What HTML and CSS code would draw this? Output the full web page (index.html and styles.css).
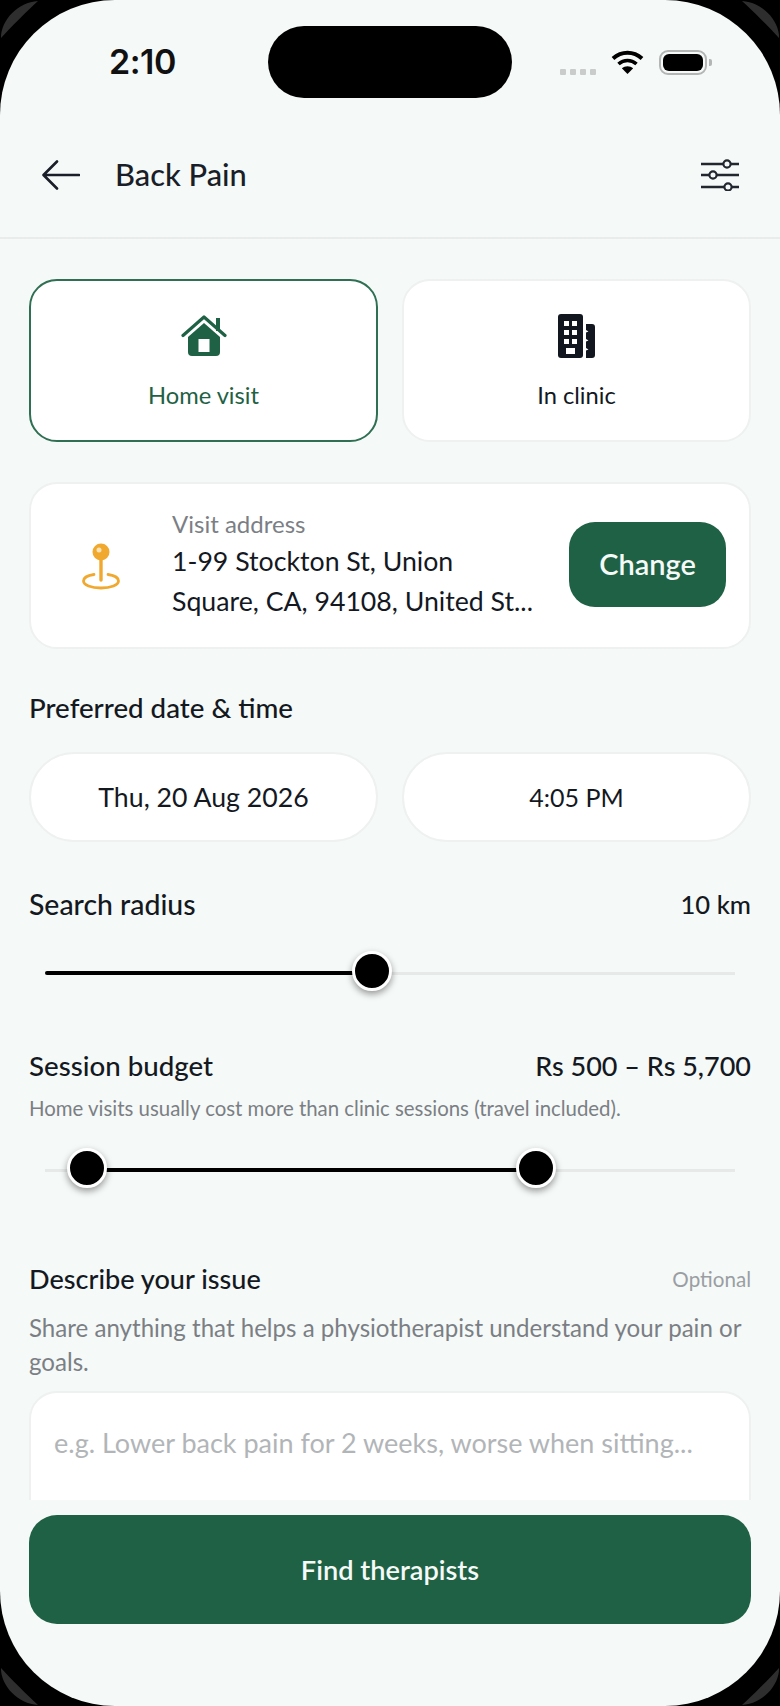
FILE: index.html
```html
<!DOCTYPE html>
<html lang="en">

<head>
    <meta charset="UTF-8" />
    <meta name="viewport" content="width=device-width, initial-scale=1" />
    <title>Back Pain</title>
    <link rel="stylesheet" href="styles.css">
</head>

<body>
    <div class="screen">
        <div class="status-bar">
            <div class="status-time">2:10</div>
            <div class="island"></div>
            <div class="status-icons">
                <div class="signal-dots"><span></span><span></span><span></span><span></span></div>
                <svg width="33" height="24" viewBox="0 0 33 24">
                    <path d="M2 8.5C10.5 .8 22.500 .8 31 8.500" fill="none" stroke="#000" stroke-width="4" />
                    <path d="M7.500 14C12.800 9.300 20.200 9.300 25.500 14" fill="none" stroke="#000" stroke-width="3.600" />
                    <path d="M16.500 24L10.800 18.300C14 15.400 19 15.400 22.200 18.300Z" fill="#000" />
                </svg>
                <div class="battery">
                    <div class="battery-level"></div>
                </div>
            </div>
        </div>

        <div class="top-bar">
            <div class="top-bar-left">
                <svg width="38" height="30" viewBox="0 0 38 30">
                    <path d="M37 15H2M15 1.500L1.500 15L15 28.500" fill="none" stroke="#1a1e28" stroke-width="2.600" stroke-linecap="round" stroke-linejoin="round" />
                </svg>
                <div class="page-title">Back Pain</div>
            </div>
            <svg width="40" height="32" viewBox="0 0 40 32">
                <path d="M1 5H39M1 16H39M1 28H39" stroke="#22262e" stroke-width="2.600" />
                <circle cx="27" cy="5" r="3.600" fill="#f5f9f7" stroke="#22262e" stroke-width="2.200" />
                <circle cx="13" cy="16" r="3.600" fill="#f5f9f7" stroke="#22262e" stroke-width="2.200" />
                <circle cx="28" cy="28" r="3.600" fill="#f5f9f7" stroke="#22262e" stroke-width="2.200" />
            </svg>
        </div>

        <div class="content">
            <div class="two-col">
                <div class="visit-card selected">
                    <svg width="46" height="43" viewBox="0 0 46 43">
                        <path d="M2 21.500L23 3L44 21.500" fill="none" stroke="#1f6144" stroke-width="3.200" stroke-linecap="round" stroke-linejoin="round" />
                        <rect x="35" y="4" width="4" height="13" fill="#1f6144" />
                        <path d="M7 23L23 9L39 23V38Q39 42 35 42H11Q7 42 7 38Z" fill="#1f6144" />
                        <rect x="17.500" y="25" width="11" height="13" fill="#fff" />
                    </svg>
                    <div class="visit-label">Home visit</div>
                </div>
                <div class="visit-card">
                    <svg width="37" height="44" viewBox="0 0 37 44">
                        <rect x="0" y="0" width="25" height="44" rx="3" fill="#12161f" />
                        <path d="M28 10H34Q37 10 37 13V41Q37 44 34 44H28V36.500L30.500 35.500L28 34V27.500L30.500 26.500L28 25V18.500L30.500 17.500L28 16Z" fill="#12161f" />
                        <g fill="#fff">
                            <rect x="6" y="7" width="5" height="5" />
                            <rect x="14" y="7" width="5" height="5" />
                            <rect x="6" y="16" width="5" height="5" />
                            <rect x="14" y="16" width="5" height="5" />
                            <rect x="6" y="25" width="5" height="5" />
                            <rect x="14" y="25" width="5" height="5" />
                            <rect x="8" y="34" width="9" height="6" />
                        </g>
                    </svg>
                    <div class="visit-label dark">In clinic</div>
                </div>
            </div>

            <div class="address-card">
                <svg class="pin" width="38" height="47" viewBox="0 0 38 47">
                    <path d="M12 31.500C5.500 32.500 1.500 35 1.500 38C1.500 42 9 45 19 45C29 45 36.500 42 36.500 38C36.500 35 32.500 32.500 26 31.500" fill="none" stroke="#f0a92e" stroke-width="2.800" stroke-linecap="round" />
                    <path d="M19 14V37" stroke="#f0a92e" stroke-width="3.400" stroke-linecap="round" />
                    <circle cx="19" cy="9" r="8.500" fill="#f0a92e" />
                    <circle cx="17" cy="7" r="2.500" fill="#fbe3b5" />
                </svg>
                <div class="address-text">
                    <div class="address-caption">Visit address</div>
                    <div class="address-line">1-99 Stockton St, Union</div>
                    <div class="address-line">Square, CA, 94108, United St...</div>
                </div>
                <div class="change-btn">Change</div>
            </div>

            <div class="section-label date-label">Preferred date &amp; time</div>
            <div class="two-col pills">
                <div class="pill">Thu, 20 Aug 2026</div>
                <div class="pill time">4:05 PM</div>
            </div>

            <div class="label-row radius-row">
                <div class="section-label radius-title">Search radius</div>
                <div class="section-value small">10 km</div>
            </div>
            <div class="slider radius-slider">
                <div class="track-fill" style="left: 0; width: 47.4%"></div>
                <div class="thumb" style="left: 47.4%"></div>
            </div>

            <div class="label-row budget-row">
                <div class="section-label">Session budget</div>
                <div class="section-value">Rs 500 – Rs 5,700</div>
            </div>
            <div class="hint">Home visits usually cost more than clinic sessions (travel included).</div>
            <div class="slider budget-slider">
                <div class="track-fill" style="left: 6.1%; width: 65.1%"></div>
                <div class="thumb" style="left: 6.1%"></div>
                <div class="thumb" style="left: 71.2%"></div>
            </div>

            <div class="label-row describe-row">
                <div class="section-label describe-title">Describe your issue</div>
                <div class="optional">Optional</div>
            </div>
            <div class="describe-help">Share anything that helps a physiotherapist understand your pain or goals.</div>
            <div class="issue-box">e.g. Lower back pain for 2 weeks, worse when sitting...</div>
        </div>

        <div class="footer">
            <div class="find-btn">Find therapists</div>
        </div>

        <!-- bezel highlight in the corners -->
        <svg class="bezel bezel-tl" width="46" height="46" viewBox="0 0 46 46">
            <path d="M1 38C1 20 18 2 38 1C28 10 10 28 1 38Z" fill="#2e2e2e" />
        </svg>
        <svg class="bezel bezel-tr" width="46" height="46" viewBox="0 0 46 46">
            <path d="M1 38C1 20 18 2 38 1C28 10 10 28 1 38Z" fill="#2e2e2e" />
        </svg>
        <svg class="bezel bezel-bl" width="46" height="46" viewBox="0 0 46 46">
            <path d="M1 38C1 20 18 2 38 1C28 10 10 28 1 38Z" fill="#2e2e2e" />
        </svg>
        <svg class="bezel bezel-br" width="46" height="46" viewBox="0 0 46 46">
            <path d="M1 38C1 20 18 2 38 1C28 10 10 28 1 38Z" fill="#2e2e2e" />
        </svg>
    </div>
</body>

</html>
```

FILE: styles.css
```css
* {
    box-sizing: border-box;
}

body {
    margin: 0;
    background-color: #000;
    font-family: "Lato", "Liberation Sans", sans-serif;
    color: #14181f;
}

.screen {
    height: 1706px;
    width: 780px;
    background-color: #f5f9f7;
    border-radius: 115px;
    display: flex;
    flex-direction: column;
    overflow: hidden;
}

/* status bar */
.status-bar {
    display: grid;
    grid-template-columns: 268px 244px 268px;
    padding-top: 26px;
    height: 98px;
    flex-shrink: 0;
}

.status-time {
    font-family: "Inter", sans-serif;
    font-size: 34px;
    font-weight: 600;
    line-height: 72px;
    padding-left: 109px;
    letter-spacing: -0.5px;
    color: #111;
}

.island {
    height: 72px;
    background-color: #000;
    border-radius: 36px;
}

.status-icons {
    display: flex;
    align-items: center;
    padding-left: 48px;
    gap: 15px;
}

.signal-dots {
    display: flex;
    gap: 4px;
    margin-top: 19px;
}

.signal-dots span {
    width: 6px;
    height: 6px;
    background-color: #c9cccb;
    border-radius: 1px;
}

.battery {
    position: relative;
    width: 48px;
    height: 25px;
    border: 2px solid #b4b6b5;
    border-radius: 9px;
    padding: 2px;
}

.battery::after {
    content: "";
    position: absolute;
    right: -7px;
    top: 7px;
    width: 3px;
    height: 7px;
    background-color: #b4b6b5;
    border-radius: 0 2px 2px 0;
}

.battery-level {
    height: 100%;
    background-color: #000;
    border-radius: 6px;
}

/* header */
.top-bar {
    height: 141px;
    flex-shrink: 0;
    padding: 14px 40px 0 42px;
    display: flex;
    align-items: center;
    justify-content: space-between;
    border-bottom: 2px solid #e9eceb;
}

.top-bar-left {
    display: flex;
    align-items: center;
    gap: 35px;
}

.page-title {
    font-size: 30.800px;
    font-weight: 500;
    color: #1a1e28;
}

/* main content */
.content {
    flex: 1;
    min-height: 0;
    overflow: hidden;
    padding: 40px 29px 0 29px;
}

.two-col {
    display: grid;
    grid-template-columns: 1fr 1fr;
    gap: 24px;
}

.visit-card {
    height: 163px;
    background-color: #fff;
    border: 2px solid #eef1ef;
    border-radius: 28px;
    display: flex;
    flex-direction: column;
    align-items: center;
    padding-top: 33px;
}

.visit-card.selected {
    border-color: #2f6f53;
}

.visit-label {
    margin-top: 23px;
    font-size: 23.700px;
    line-height: 30px;
    color: #1f6144;
}

.visit-label.dark {
    margin-top: 22px;
    color: #14181f;
}

.address-card {
    margin-top: 40px;
    height: 167px;
    background-color: #fff;
    border: 2px solid #eef1ef;
    border-radius: 28px;
    display: flex;
    align-items: center;
    padding-left: 51px;
    padding-right: 23px;
}

.pin {
    flex-shrink: 0;
    margin-top: 2px;
}

.address-text {
    flex: 1;
    padding-left: 52px;
    padding-bottom: 4px;
}

.address-caption {
    font-size: 24px;
    line-height: 34px;
    color: #7b7f85;
}

.address-line {
    font-size: 26.700px;
    line-height: 40px;
}

.change-btn {
    width: 157px;
    height: 85px;
    margin-bottom: 2px;
    padding-bottom: 2px;
    background-color: #1f6144;
    color: #f5f9f7;
    border-radius: 26px;
    font-size: 29px;
    font-weight: 600;
    display: flex;
    align-items: center;
    justify-content: center;
}

.section-label {
    font-size: 27.700px;
    line-height: 34px;
    font-weight: 500;
}

.section-value {
    font-size: 27px;
    line-height: 34px;
    font-weight: 500;
}

.section-value.small {
    font-size: 25.600px;
}

.radius-title {
    font-size: 28.400px;
}

.describe-title {
    font-size: 27.100px;
}

.date-label {
    margin-top: 42px;
}

.pills {
    margin-top: 27px;
}

.pill {
    height: 90px;
    background-color: #fff;
    border: 2px solid #eef1ef;
    border-radius: 45px;
    font-size: 26.700px;
    display: flex;
    align-items: center;
    justify-content: center;
}

.pill.time {
    font-size: 25px;
}

.label-row {
    display: flex;
    justify-content: space-between;
    align-items: center;
}

.radius-row {
    margin-top: 45px;
}

.budget-row {
    margin-top: 56px;
}

.describe-row {
    margin-top: 72px;
}

/* sliders */
.slider {
    position: relative;
    height: 40px;
    margin-left: 16px;
    margin-right: 16px;
}

.slider::before {
    content: "";
    position: absolute;
    left: 0;
    right: 0;
    top: 19px;
    height: 3px;
    background-color: #e6e9e7;
}

.radius-slider {
    margin-top: 32px;
}

.budget-slider {
    margin-top: 30px;
}

.track-fill {
    position: absolute;
    top: 18px;
    height: 4px;
    background-color: #000;
    border-radius: 2px;
}

.thumb {
    position: absolute;
    top: -2px;
    width: 40px;
    height: 40px;
    margin-left: -20px;
    background-color: #000;
    border: 3px solid #fff;
    border-radius: 50%;
    box-shadow: 0 3px 7px rgba(0, 0, 0, 0.4);
}

.hint {
    margin-top: 13px;
    font-size: 20.400px;
    line-height: 24px;
    white-space: nowrap;
    color: #7b7f85;
}

.optional {
    font-size: 20.600px;
    color: #9a9ea3;
}

.describe-help {
    margin-top: 15px;
    font-size: 24.100px;
    line-height: 34px;
    color: #7b7f85;
}

.issue-box {
    margin-top: 12px;
    height: 170px;
    background-color: #fff;
    border: 2px solid #eef1ef;
    border-radius: 28px;
    padding: 33px 23px 0 23px;
    font-size: 27px;
    line-height: 34px;
    white-space: nowrap;
    color: #b2b5b8;
}

/* bottom button */
.footer {
    height: 206px;
    flex-shrink: 0;
    padding: 15px 29px 0 29px;
}

.find-btn {
    height: 109px;
    background-color: #1f6144;
    color: #f5f9f7;
    border-radius: 28px;
    font-size: 27.200px;
    font-weight: 600;
    display: flex;
    align-items: center;
    justify-content: center;
}

/* corner highlights on the phone frame */
.bezel {
    position: fixed;
}

.bezel-tl {
    left: 0;
    top: 0;
}

.bezel-tr {
    right: 0;
    top: 0;
    transform: scaleX(-1);
}

.bezel-bl {
    left: 0;
    bottom: 0;
    transform: scaleY(-1);
}

.bezel-br {
    right: 0;
    bottom: 0;
    transform: scale(-1, -1);
}
```
